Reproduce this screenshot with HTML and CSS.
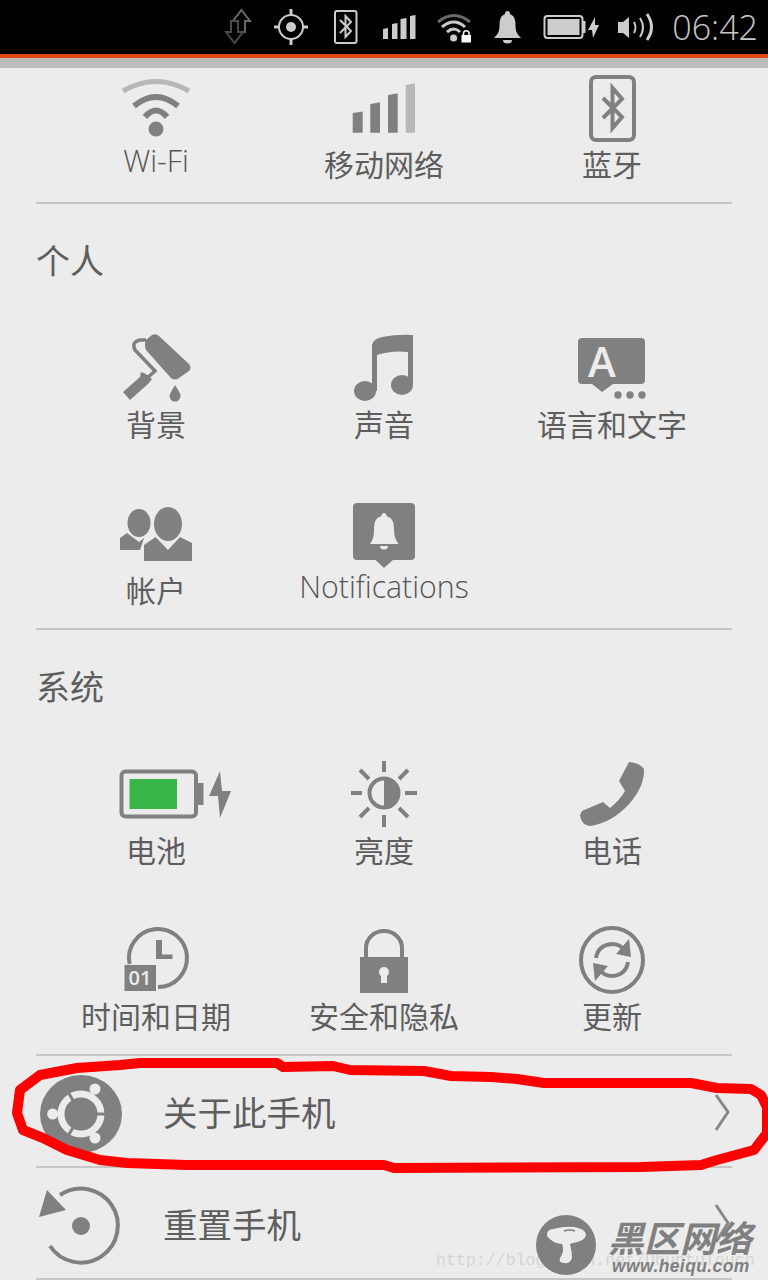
FILE: index.html
```html
<!DOCTYPE html>
<html lang="zh-CN">

<head>
    <meta charset="UTF-8">
    <meta name="viewport" content="width=device-width, initial-scale=1.0">
    <title>系统设置</title>
    <link rel="stylesheet" href="styles.css">
</head>

<body>
    <!-- status bar, every icon uses screen coordinates in its viewBox -->
    <div class="status">
        <svg width="40" height="54" viewBox="222 0 40 54">
            <path class="st-dim" d="M241.5 10 L250 21 H245 V32 H238 V21 H233 Z" />
            <path class="st-dim2" d="M234.5 43 L226 32 H231 V21 H238 V32 H243 Z" />
        </svg>
        <svg width="59" height="54" viewBox="262 0 59 54">
            <circle class="st-line" cx="291" cy="27" r="12" />
            <circle class="st-fill" cx="291" cy="27" r="5" />
            <path class="st-line thick" d="M291 9 V15 M291 39 V45 M274 27 H280 M302 27 H308" />
        </svg>
        <svg width="49" height="54" viewBox="321 0 49 54">
            <rect class="st-line" x="335" y="11" width="21.5" height="32" rx="2" />
            <path class="st-line" d="M340 20 L351 31 L345.5 37 V16 L351 22 L340 33" />
        </svg>
        <svg width="56" height="54" viewBox="370 0 56 54">
            <path class="st-fill" d="M383 29 L388 28 V39 H383 Z M392 24 L397.5 23 V39 H392 Z M400.5 19 L406.5 18 V39 H400.5 Z M410 16 L415.5 15 V39 H410 Z" />
        </svg>
        <svg width="56" height="54" viewBox="426 0 56 54">
            <path class="st-dark" d="M438 22 Q454 9 470 22" />
            <path class="st-line thick" d="M442 27 Q454 17 465 27" />
            <path class="st-line thick" d="M447 32 Q454 26 460 32" />
            <circle class="st-fill" cx="453.6" cy="38" r="3.5" />
            <rect class="st-white" x="461.5" y="35" width="9.5" height="7.5" />
            <path class="st-thin" d="M463.5 35 V33.5 A2.7 2.7 0 0 1 469 33.5 V35" />
        </svg>
        <svg width="50" height="54" viewBox="482 0 50 54">
            <path class="st-fill" d="M507.5 11 C505.5 11 505 12.5 505 14 C500 16 499.5 21 499.5 26 C499.5 32 497 35 494 38 H521 C518 35 515.5 32 515.5 26 C515.5 21 515 16 510 14 C510 12.5 509.5 11 507.5 11 Z" />
            <path class="st-fill" d="M503 40 H512 A4.5 3.5 0 0 1 503 40 Z" />
        </svg>
        <svg width="76" height="54" viewBox="532 0 76 54">
            <rect class="st-line" x="544.5" y="16" width="38" height="22" rx="3" />
            <rect class="st-fill" x="547.5" y="19" width="32" height="16" />
            <rect class="st-fill" x="583" y="21" width="2.5" height="12" />
            <path class="st-fill" d="M595 17 L588 30 H592 L593 38 L599 25 H595 Z" />
        </svg>
        <svg width="55" height="54" viewBox="608 0 55 54">
            <path class="st-fill" d="M618 22 H623 L629 17 V38 L623 33 H618 Z" />
            <path class="st-line" d="M634 22 Q637 27.500 634 33" />
            <path class="st-line" d="M640 18 Q646 27.500 640 37" />
            <path class="st-line thick" d="M647 14 Q656 27 647 40" />
        </svg>
        <div class="clock">06:42</div>
    </div>
    <div class="shade"></div>

    <div class="section top">
        <div class="grid">
            <div class="tile">
                <svg width="160" height="72" viewBox="76 70 160 72">
                    <path class="line light" d="M123 91 Q156 72 189 91" />
                    <path class="line wide" d="M134 106 Q156 88 178 106" />
                    <path class="line wide" d="M145 117 Q156 104 167 117" />
                    <circle class="fill" cx="156" cy="129" r="7.500" />
                </svg>
                <span class="latin">Wi-Fi</span>
            </div>
            <div class="tile">
                <svg width="160" height="72" viewBox="304 70 160 72">
                    <path class="fill" d="M352.700 113 L362.700 111.500 V132.700 H352.700 Z M370.300 104 L380 102.300 V132.700 H370.300 Z M388 95 L397.700 93.300 V132.700 H388 Z" />
                    <path class="fill-light" d="M405.700 85 L415 83.300 V132.700 H405.700 Z" />
                </svg>
                <span>移动网络</span>
            </div>
            <div class="tile">
                <svg width="160" height="72" viewBox="532 70 160 72">
                    <rect class="line" x="591" y="77" width="43" height="63" rx="5" />
                    <path class="line" d="M603 98 L622 117 L612.500 128 V88 L622 99 L603 118" />
                </svg>
                <span>蓝牙</span>
            </div>
        </div>
    </div>

    <div class="section personal">
        <h2>个人</h2>
        <div class="grid">
            <div class="tile">
                <svg width="160" height="72" viewBox="76 332 160 72">
                    <path class="fill" d="M146 340 L152 335 Q156 333 159 336 L189 364 Q192 368 189 371 L179 378 Q175 381 171 378 L146 350 Q144 345 146 340 Z" />
                    <path class="line thin" d="M146 340 H140 Q131 342 135 350 L155 371 L146 379" />
                    <path class="fill" d="M123 392 L140 377 L141 372 L146 374 L152 379 L148 384 L130 400 Z" />
                    <path class="fill" d="M175 385 Q181 394 180.500 396 A5.500 5.500 0 0 1 169.500 396 Q170 393 175 385 Z" />
                </svg>
                <span>背景</span>
            </div>
            <div class="tile">
                <svg width="160" height="72" viewBox="304 332 160 72">
                    <path class="fill" d="M372 391 V345 Q373 339 382 337 Q398 334 413 335 V385 H408 V352 Q392 350 377 355 V391 Z" />
                    <ellipse class="fill" cx="365" cy="391" rx="11" ry="10" />
                    <ellipse class="fill" cx="402" cy="385" rx="11" ry="10" />
                </svg>
                <span>声音</span>
            </div>
            <div class="tile">
                <svg width="160" height="72" viewBox="532 332 160 72">
                    <path class="fill" d="M582 338 H641 Q645 338 645 342 V380 Q645 384 641 384 H613 L602 392 L592 384 H582 Q578 384 578 380 V342 Q578 338 582 338 Z" />
                    <circle class="fill" cx="618" cy="395" r="3.700" />
                    <circle class="fill" cx="630" cy="395" r="3.700" />
                    <circle class="fill" cx="642" cy="395" r="3.700" />
                    <text class="glyph-a" x="602" y="377">A</text>
                </svg>
                <span>语言和文字</span>
            </div>
            <div class="tile">
                <svg width="160" height="72" viewBox="76 498 160 72">
                    <ellipse class="fill" cx="139" cy="523" rx="11.500" ry="14" />
                    <ellipse class="fill" cx="168" cy="524" rx="14" ry="17" />
                    <path class="fill" d="M120 550 V538 L127 533 L139 542 L144 538 L140 550 Z" />
                    <path class="fill" d="M144 561 V545 L155.500 537 L168 550 L180 537 L192 543 V561 Z" />
                </svg>
                <span>帐户</span>
            </div>
            <div class="tile">
                <svg width="160" height="72" viewBox="304 498 160 72">
                    <path class="fill" d="M357 503 H411 Q415 503 415 507 V556 Q415 560 411 560 H393 L384 568 L375.500 560 H357 Q353 560 353 556 V507 Q353 503 357 503 Z" />
                    <path class="cut" d="M384 513 C382 513 381.500 515 381.500 516 C375 518 374 523 374 530 C374 536 373 540 370 544 H398.500 C395.500 540 394 536 394 530 C394 523 393 518 386.500 516 C386.500 515 386 513 384 513 Z" />
                    <path class="cut" d="M380 546 H388 A4 3.500 0 0 1 380 546 Z" />
                </svg>
                <span class="latin">Notifications</span>
            </div>
        </div>
    </div>

    <div class="section system">
        <h2>系统</h2>
        <div class="grid">
            <div class="tile">
                <svg width="160" height="72" viewBox="76 758 160 72">
                    <rect class="line" x="121.500" y="771.500" width="74.500" height="45" rx="4" />
                    <rect class="green" x="129.500" y="779" width="47.500" height="30" />
                    <rect class="fill" x="197.500" y="783" width="6" height="22" />
                    <path class="fill" d="M220 771 L209 796 H218 L220 818 L231 791 H222 Z" />
                </svg>
                <span>电池</span>
            </div>
            <div class="tile">
                <svg width="160" height="72" viewBox="304 758 160 72">
                    <circle class="line" cx="384" cy="793" r="14.500" />
                    <path class="fill" d="M384 778.500 A14.500 14.500 0 0 1 384 807.500 Z" />
                    <path class="line" d="M384 761 V772 M384 815 V827 M351 793 H362 M405 793 H417 M360 770 L369 779 M408 770 L399 779 M360 817 L369 808 M408 817 L399 808" />
                </svg>
                <span>亮度</span>
            </div>
            <div class="tile">
                <svg width="160" height="72" viewBox="532 758 160 72">
                    <path class="fill" d="M629 762 Q640 763 644 769 Q645 785 630 803 Q612 823 590 826 Q581 825 580 815 L582 811 L603 802 L610 808 Q620 800 625 791 L619 781 Z" />
                </svg>
                <span>电话</span>
            </div>
            <div class="tile">
                <svg width="160" height="72" viewBox="76 924 160 72">
                    <path class="line" d="M129.600 964 A29 29 0 1 1 158 987" />
                    <path class="fill" d="M156 940 H162 V954.500 H172.500 V959 H156 Z" />
                    <rect class="fill" x="124.500" y="965" width="31.500" height="26" />
                    <text class="glyph-num" x="140" y="985">01</text>
                </svg>
                <span>时间和日期</span>
            </div>
            <div class="tile">
                <svg width="160" height="72" viewBox="304 924 160 72">
                    <path class="line" d="M366 958 V948 A18 17 0 0 1 402 948 V958" />
                    <rect class="fill" x="360" y="957" width="48" height="36" />
                    <circle class="cut" cx="384" cy="972" r="5" />
                    <rect class="cut" x="381" y="973" width="6" height="10" />
                </svg>
                <span>安全和隐私</span>
            </div>
            <div class="tile">
                <svg width="160" height="72" viewBox="532 924 160 72">
                    <ellipse class="line" cx="612" cy="960" rx="31" ry="32" />
                    <path class="line" d="M596 958 Q598 945 612 944 Q620 944 624 950" />
                    <path class="fill" d="M629 939 L631 957 L616 954 Z" />
                    <path class="line" d="M628 962 Q626 975 612 976 Q604 976 600 970" />
                    <path class="fill" d="M595 981 L593 963 L608 966 Z" />
                </svg>
                <span>更新</span>
            </div>
        </div>
    </div>

    <div class="row">
        <svg width="88" height="110" viewBox="36 1056 88 110">
            <ellipse class="fill" cx="81" cy="1114" rx="41" ry="39" />
            <circle class="ring" cx="81" cy="1114" r="20" />
            <path class="gap" d="M81 1114 H108 M81 1114 L68 1092 M81 1114 L68 1136" />
            <circle class="fill" cx="81" cy="1114" r="16" />
            <circle class="cut" cx="95" cy="1089" r="5.500" />
            <circle class="cut" cx="52.700" cy="1114" r="5.500" />
            <circle class="cut" cx="95" cy="1138" r="5.500" />
        </svg>
        <span class="row-label">关于此手机</span>
        <svg class="chevron" width="24" height="110" viewBox="708 1056 24 110">
            <path class="chev" d="M716 1095 L728 1112 L716 1130" />
        </svg>
    </div>
    <div class="row">
        <svg width="88" height="110" viewBox="36 1168 88 110">
            <path class="line" d="M60 1195 A37 37 0 1 1 50 1246" />
            <path class="fill" d="M47 1190 L39 1217 L66 1210 Z" />
            <circle class="fill" cx="81" cy="1226" r="9" />
        </svg>
        <span class="row-label">重置手机</span>
        <svg class="chevron" width="24" height="110" viewBox="708 1168 24 110">
            <path class="chev" d="M716 1205 L728 1223 L716 1242" />
        </svg>
    </div>

    <!-- hand drawn marker on top of the screenshot -->
    <svg class="marker" width="768" height="1280" viewBox="0 0 768 1280">
        <path class="marker-line" d="M17 1113 L20 1090 L40 1075 L77 1068 L120 1065 L140 1063 L277 1063 L283 1067 L333 1066 L350 1070 L424 1071 L451 1076 L491 1077 L517 1079 L544 1083 L691 1083 L717 1088 L751 1089 L761 1095 L767 1107 L767 1133 L754 1150 L717 1160 L701 1165 L641 1167 L394 1168 L384 1165 L187 1165 L127 1163 L100 1160 L67 1150 L43 1138 L23 1130 Z" />
    </svg>

    <div class="url">http://blog.csdn.net/UbuntuTouch</div>
    <div class="stamp">
        <svg width="60" height="60" viewBox="536 1215 60 60">
            <circle class="fill" cx="566" cy="1245" r="30" />
            <path class="cut" d="M547 1236 Q546 1230 553 1229 Q565 1226 574 1227 Q586 1229 586 1235 Q585 1241 573 1243 L570 1244 Q572 1252 572 1258 Q570 1264 565 1263 Q558 1263 560 1258 Q565 1250 562 1244 Q552 1243 547 1236 Z" />
            <path class="slit" d="M564 1231 Q570 1229 575 1231" />
        </svg>
        <div class="stamp-text">
            <span class="stamp-name">黑区网络</span>
            <span class="stamp-site">www.heiqu.com</span>
        </div>
    </div>
</body>

</html>
```

FILE: styles.css
```css
html, body {
    margin: 0;
    padding: 0;
}

body {
    position: relative;
    width: 768px;
    height: 1280px;
    overflow: hidden;
    background-color: #ececec;
    color: #5e5e5e;
    font-family: "Open Sans", "Noto Sans CJK SC", sans-serif;
}

svg {
    display: block;
}

/* status bar */
.status {
    display: flex;
    justify-content: flex-end;
    align-items: center;
    height: 54px;
    padding-right: 10px;
    background-color: #000000;
    border-bottom: 4px solid #dd4814;
}

.clock {
    color: #c8c8c8;
    font-size: 34px;
    font-weight: 300;
    line-height: 54px;
    margin-left: 9px;
}

.shade {
    height: 10px;
    background-color: #bcbcbc;
}

.st-fill {
    fill: #cccccc;
}

.st-white {
    fill: #ffffff;
}

.st-line,
.st-dim,
.st-dim2,
.st-dark,
.st-thin {
    fill: none;
    stroke: #cccccc;
    stroke-width: 2;
}

.thick {
    stroke-width: 3;
}

.st-dim {
    stroke: #6a6a6a;
}

.st-dim2 {
    stroke: #4a4a4a;
}

.st-dark {
    stroke: #6a6a6a;
    stroke-width: 3;
}

.st-thin {
    stroke: #ffffff;
    stroke-width: 1.5;
}

/* sections */
.section {
    margin: 0 36px;
    border-bottom: 2px solid #c6c6c6;
}

.section h2 {
    margin: 0;
    padding-top: 1px;
    font-size: 34px;
    font-weight: 400;
    line-height: 112px;
}

.top {
    padding: 2px 0 16px;
}

.top .tile span {
    margin-top: 2px;
}

.personal {
    padding-bottom: 16px;
}

.system {
    padding-bottom: 16px;
}

.grid {
    display: grid;
    grid-template-columns: repeat(3, 228px);
    justify-content: center;
    row-gap: 52px;
}

.personal .grid,
.system .grid {
    padding-top: 15px;
}

.tile {
    display: flex;
    flex-direction: column;
    align-items: center;
    font-size: 30px;
    line-height: 42px;
    white-space: nowrap;
}

.tile .latin {
    margin-top: -4px;
    color: #555555;
    font-size: 30.3px;
    font-weight: 300;
}

.top .tile .latin {
    margin-top: -2px;
}

/* list rows */
.row {
    display: flex;
    align-items: center;
    height: 110px;
    margin: 0 36px;
    border-bottom: 2px solid #c6c6c6;
}

.row-label {
    margin-left: 39px;
    font-size: 34.5px;
}

.chevron {
    margin-left: auto;
}

/* icon paints */
.fill {
    fill: #808080;
}

.fill-light {
    fill: #b8b8b8;
}

.cut {
    fill: #ececec;
}

.green {
    fill: #39b54a;
}

.line {
    fill: none;
    stroke: #808080;
    stroke-width: 4;
}

.line.light {
    stroke: #b8b8b8;
    stroke-width: 5;
}

.line.wide {
    stroke-width: 6;
}

.line.thin {
    stroke-width: 3.5;
}

.ring {
    fill: none;
    stroke: #ececec;
    stroke-width: 7;
}

.gap {
    fill: none;
    stroke: #808080;
    stroke-width: 3;
}

.chev {
    fill: none;
    stroke: #888888;
    stroke-width: 3;
}

.slit {
    fill: none;
    stroke: #808080;
    stroke-width: 1.5;
}

.glyph-a {
    fill: #ececec;
    font-family: "Open Sans", sans-serif;
    font-size: 42px;
    font-weight: 600;
    text-anchor: middle;
}

.glyph-num {
    fill: #ececec;
    font-family: "Open Sans", sans-serif;
    font-size: 20px;
    font-weight: 600;
    text-anchor: middle;
}

/* overlays */
.marker {
    position: absolute;
    top: 0;
    left: 0;
}

.marker-line {
    fill: none;
    stroke: #ff0000;
    stroke-width: 10;
    stroke-linejoin: round;
}

.url {
    position: absolute;
    left: 436px;
    top: 1250px;
    color: #d6d6d0;
    font-family: "Liberation Mono", monospace;
    font-size: 16.6px;
    line-height: 22px;
    white-space: nowrap;
}

.stamp {
    position: absolute;
    left: 536px;
    top: 1215px;
    display: flex;
    gap: 12px;
}

.stamp-text {
    display: flex;
    flex-direction: column;
    color: #808080;
    font-style: italic;
    font-weight: 700;
}

.stamp-name {
    font-family: "Noto Sans CJK SC", sans-serif;
    font-size: 36px;
    line-height: 42px;
}

.stamp-site {
    margin-left: 4px;
    font-family: "Liberation Sans", sans-serif;
    font-size: 17.5px;
    line-height: 18px;
    letter-spacing: 0.4px;
}
```
